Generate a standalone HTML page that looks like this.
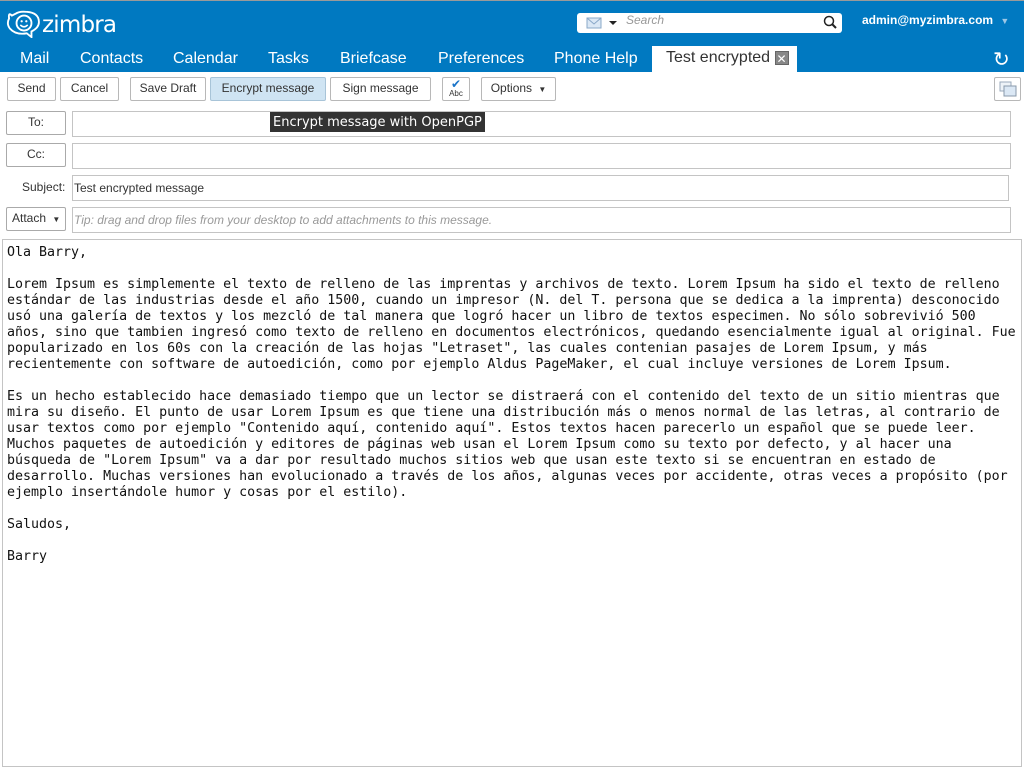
<!DOCTYPE html>
<html><head><meta charset="utf-8"><style>
*{box-sizing:border-box;margin:0;padding:0}
body{width:1024px;height:768px;overflow:hidden;background:#fff;font-family:"Liberation Sans","DejaVu Sans",sans-serif;position:relative}
.hdr{position:absolute;left:0;top:0;width:1024px;height:72px;background:#0079c1;border-top:1px solid #9a9a9a}
.logo{position:absolute;left:6px;top:9px;color:#fff;font-size:23px;font-family:"DejaVu Sans",sans-serif;letter-spacing:-0.8px}
.search{position:absolute;left:577px;top:12px;width:265px;height:20px;background:#fff;border-radius:3px}
.search .ph{position:absolute;left:49px;top:0px;font-style:italic;color:#999;font-size:12px}
.user{position:absolute;left:862px;top:12px;color:#fff;font-weight:bold;font-size:12px}
.tabs{position:absolute;top:46px;left:0;height:26px;width:100%}
.tab{position:absolute;top:3px;color:#fff;font-size:16px;font-family:"Liberation Sans",sans-serif}
.active{position:absolute;left:652px;top:46px;width:145px;height:26px;background:#fff;color:#333;font-size:16px;padding:3px 0 0 14px}
.btn{position:absolute;top:77px;height:24px;border:1px solid #b8b8b8;border-radius:2px;background:#fff;font-size:12px;color:#333;text-align:center;line-height:21px}
.lbtn{position:absolute;left:6px;width:60px;height:24px;border:1px solid #aaa;border-radius:2px;font-size:12px;color:#333;text-align:center;line-height:21px;background:#fff}
.field{position:absolute;left:72px;height:26px;border:1px solid #c4c4c4;font-size:12px;color:#333;padding:4px 1px}
.tip{position:absolute;left:270px;top:112px;background:#333;color:#fff;font-size:13px;padding:1px 3px;font-family:"DejaVu Sans",sans-serif;height:20px;line-height:19px}
.body{position:absolute;left:2px;top:239px;width:1020px;height:528px;border:1px solid #c4c4c4;padding:5px 4px;font-family:"DejaVu Sans Mono",monospace;font-size:13.3px;line-height:16px;color:#111;white-space:pre}
</style></head><body>
<div class="hdr">
<div class="logo"><svg width="36" height="28" viewBox="0 0 38 30" style="vertical-align:-6px"><path d="M6 6 Q2 2 3 9 Q0 15 4 20 Q10 27 22 25 L27 29 L27 23 Q35 19 35 13 Q35 3 22 2 Q14 1 10 4 Z" fill="none" stroke="#fff" stroke-width="2"/><circle cx="19" cy="14" r="8" fill="none" stroke="#fff" stroke-width="2"/><circle cx="16.5" cy="12" r="1.2" fill="#fff"/><circle cx="21.5" cy="12" r="1.2" fill="#fff"/><path d="M15 16 Q19 20 23 16" fill="none" stroke="#fff" stroke-width="1.6"/></svg>zimbra</div>
<div class="search"><svg width="40" height="20" style="position:absolute;left:8px;top:0"><rect x="2" y="5" width="14" height="10" fill="#dbe8f5" stroke="#8aa8c8"/><path d="M2 5 L9 11 L16 5" fill="none" stroke="#8aa8c8"/><path d="M24 8 L32 8 L28 12Z" fill="#222"/></svg><span class="ph">Search</span><svg width="14" height="14" style="position:absolute;left:246px;top:2px"><circle cx="6" cy="6" r="4.5" fill="none" stroke="#222" stroke-width="1.5"/><path d="M9 9 L13 13" stroke="#222" stroke-width="2"/></svg></div>
<div class="user">admin@myzimbra.com <span style="color:#9cc7e6;font-size:9px;margin-left:4px">&#9660;</span></div>
<div class="tabs">
<span class="tab" style="left:20px">Mail</span><span class="tab" style="left:80px">Contacts</span><span class="tab" style="left:173px">Calendar</span><span class="tab" style="left:268px">Tasks</span><span class="tab" style="left:340px">Briefcase</span><span class="tab" style="left:438px">Preferences</span><span class="tab" style="left:554px">Phone Help</span>
<span class="tab" style="left:993px;font-size:20px;top:0">&#8635;</span>
</div>
</div>
<div class="active">Test encrypted <span style="display:inline-block;width:14px;height:14px;background:#888;color:#fff;font-size:12px;line-height:14px;text-align:center;vertical-align:-1px;border:1px solid #666">&#10005;</span></div>
<div class="btn" style="left:7px;width:49px">Send</div>
<div class="btn" style="left:60px;width:59px">Cancel</div>
<div class="btn" style="left:130px;width:76px">Save Draft</div>
<div class="btn" style="left:210px;width:116px;background:#cfe4f3;border-color:#a8c4d8">Encrypt message</div>
<div class="btn" style="left:330px;width:101px">Sign message</div>
<div class="btn" style="left:442px;width:28px;font-size:8px;line-height:10px"><span style="color:#1a74c8;font-size:12px;display:block;margin-top:1px">&#10004;</span>Abc</div>
<div class="btn" style="left:481px;width:75px">Options <span style="font-size:8px;margin-left:3px">&#9660;</span></div>
<div class="btn" style="left:994px;width:27px"><svg width="18" height="16" style="margin-top:3px"><rect x="1" y="1" width="11" height="9" fill="#eef3f8" stroke="#9ab"/><rect x="5" y="5" width="12" height="10" fill="#dbe8f5" stroke="#89a"/></svg></div>
<div class="lbtn" style="top:111px">To:</div>
<div class="field" style="top:111px;width:939px"></div>
<div class="lbtn" style="top:143px">Cc:</div>
<div class="field" style="top:143px;width:939px"></div>
<div style="position:absolute;left:22px;top:180px;font-size:12px;color:#333">Subject:</div>
<div class="field" style="top:175px;width:937px;padding-top:5px">Test encrypted message</div>
<div class="lbtn" style="top:207px;text-align:left;padding-left:5px">Attach <span style="font-size:8px;margin-left:3px">&#9660;</span></div>
<div class="field" style="top:207px;width:939px;color:#999;font-style:italic;padding-top:5px">Tip: drag and drop files from your desktop to add attachments to this message.</div>
<div class="tip">Encrypt message with OpenPGP</div>
<div class="body">Ola Barry,

Lorem Ipsum es simplemente el texto de relleno de las imprentas y archivos de texto. Lorem Ipsum ha sido el texto de relleno
estándar de las industrias desde el año 1500, cuando un impresor (N. del T. persona que se dedica a la imprenta) desconocido
usó una galería de textos y los mezcló de tal manera que logró hacer un libro de textos especimen. No sólo sobrevivió 500
años, sino que tambien ingresó como texto de relleno en documentos electrónicos, quedando esencialmente igual al original. Fue
popularizado en los 60s con la creación de las hojas "Letraset", las cuales contenian pasajes de Lorem Ipsum, y más
recientemente con software de autoedición, como por ejemplo Aldus PageMaker, el cual incluye versiones de Lorem Ipsum.

Es un hecho establecido hace demasiado tiempo que un lector se distraerá con el contenido del texto de un sitio mientras que
mira su diseño. El punto de usar Lorem Ipsum es que tiene una distribución más o menos normal de las letras, al contrario de
usar textos como por ejemplo "Contenido aquí, contenido aquí". Estos textos hacen parecerlo un español que se puede leer.
Muchos paquetes de autoedición y editores de páginas web usan el Lorem Ipsum como su texto por defecto, y al hacer una
búsqueda de "Lorem Ipsum" va a dar por resultado muchos sitios web que usan este texto si se encuentran en estado de
desarrollo. Muchas versiones han evolucionado a través de los años, algunas veces por accidente, otras veces a propósito (por
ejemplo insertándole humor y cosas por el estilo).

Saludos,

Barry</div>
</body></html>
